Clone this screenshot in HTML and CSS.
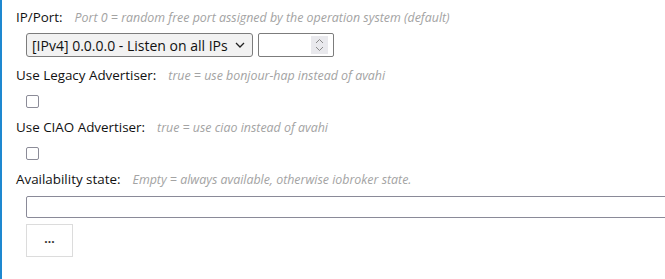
FILE: index.html
```html
<!DOCTYPE html>
<html lang="en">
<head>
  <meta charset="UTF-8">
  <title>Instance settings</title>
  <link rel="stylesheet" href="styles.css">
</head>
<body>
  <div class="panel">
    <div class="field-label">
      <span class="name">IP/Port:</span>
      <span class="hint">Port 0 = random free port assigned by the operation system (default)</span>
    </div>
    <div class="control ip-row">
      <span class="select-wrap">
        <select class="ip-select">
          <option>[IPv4] 0.0.0.0 - Listen on all IPs</option>
        </select>
        <svg class="chevron" width="10" height="6" viewBox="0 0 10 6"><path d="M1 1l4 4 4-4" fill="none" stroke="#222" stroke-width="1.3"/></svg>
      </span>
      <span class="number-wrap">
        <input type="text" class="port">
        <span class="spinner">
          <svg width="9" height="14" viewBox="0 0 9 14"><path d="M1 5l3.5-3.5L8 5M1 9l3.5 3.5L8 9" fill="none" stroke="#8a8a8a" stroke-width="1"/></svg>
        </span>
      </span>
    </div>

    <div class="field-label gap-top">
      <span class="name">Use Legacy Advertiser:</span>
      <span class="hint">true = use bonjour-hap instead of avahi</span>
    </div>
    <div class="control check-row">
      <input type="checkbox" class="check">
    </div>

    <div class="field-label after-check">
      <span class="name">Use CIAO Advertiser:</span>
      <span class="hint">true = use ciao instead of avahi</span>
    </div>
    <div class="control check-row">
      <input type="checkbox" class="check">
    </div>

    <div class="field-label after-check">
      <span class="name">Availability state:</span>
      <span class="hint">Empty = always available, otherwise iobroker state.</span>
    </div>
    <div class="control state-row">
      <input type="text" class="state">
    </div>
    <div class="control">
      <button class="pick">...</button>
    </div>
  </div>
</body>
</html>
```

FILE: styles.css
```css
html, body {
  margin: 0;
  height: 100%;
  overflow: hidden;
  background: #fff;
}
body {
  font-family: "Open Sans", "Noto Sans", sans-serif;
  color: #111;
}
.panel {
  min-height: 100%;
  box-sizing: border-box;
  border-left: 2px solid #1e88d0;
  padding: 7px 0 0 14px;
}
.field-label {
  display: flex;
  align-items: baseline;
  height: 20px;
  line-height: 20px;
  white-space: nowrap;
}
.name {
  font-size: 13.4px;
  margin-right: 12px;
}
.hint {
  font-size: 12.4px;
  font-style: italic;
  color: #a3a3a3;
}
.gap-top { margin-top: 8px; }
.after-check { margin-top: 9px; }
.control {
  padding-left: 10px;
}
.ip-row {
  display: flex;
  gap: 5px;
  margin-top: 6px;
}
.select-wrap, .number-wrap {
  position: relative;
  display: inline-block;
}
.ip-select {
  appearance: none;
  -webkit-appearance: none;
  width: 227px;
  height: 24px;
  margin: 0;
  padding: 0 0 0 5px;
  font-family: inherit;
  font-size: 14px;
  color: #111;
  background: #f2f2f2;
  border: 1px solid #7c7c7c;
  border-radius: 3px;
}
.chevron {
  position: absolute;
  right: 8px;
  top: 9px;
  pointer-events: none;
}
.port {
  box-sizing: border-box;
  width: 76px;
  height: 24px;
  margin: 0;
  padding: 0 4px;
  border: 1px solid #7c7c7c;
  border-radius: 2px;
  font-family: inherit;
  font-size: 14px;
}
.spinner {
  position: absolute;
  right: 6px;
  top: 3px;
  width: 17px;
  height: 18px;
  background: #e9e9ed;
  display: flex;
  align-items: center;
  justify-content: center;
}
.check-row {
  margin-top: 10px;
  height: 13px;
}
.check {
  appearance: none;
  -webkit-appearance: none;
  display: block;
  width: 13px;
  height: 13px;
  margin: 0;
  border: 1px solid #8c8c98;
  border-radius: 2px;
  background: #fff;
}
.state-row {
  margin-top: 7px;
}
.state {
  box-sizing: border-box;
  display: block;
  width: calc(100% + 20px);
  height: 22px;
  margin: 0;
  border: 1px solid #8a8a98;
  border-radius: 2px;
}
.pick {
  display: block;
  margin-top: 6px;
  width: 47px;
  height: 33px;
  background: #fff;
  border: 1px solid #dcdcdc;
  font-family: inherit;
  font-size: 12px;
  font-weight: bold;
  color: #333;
  padding: 0 0 4px;
}
```
